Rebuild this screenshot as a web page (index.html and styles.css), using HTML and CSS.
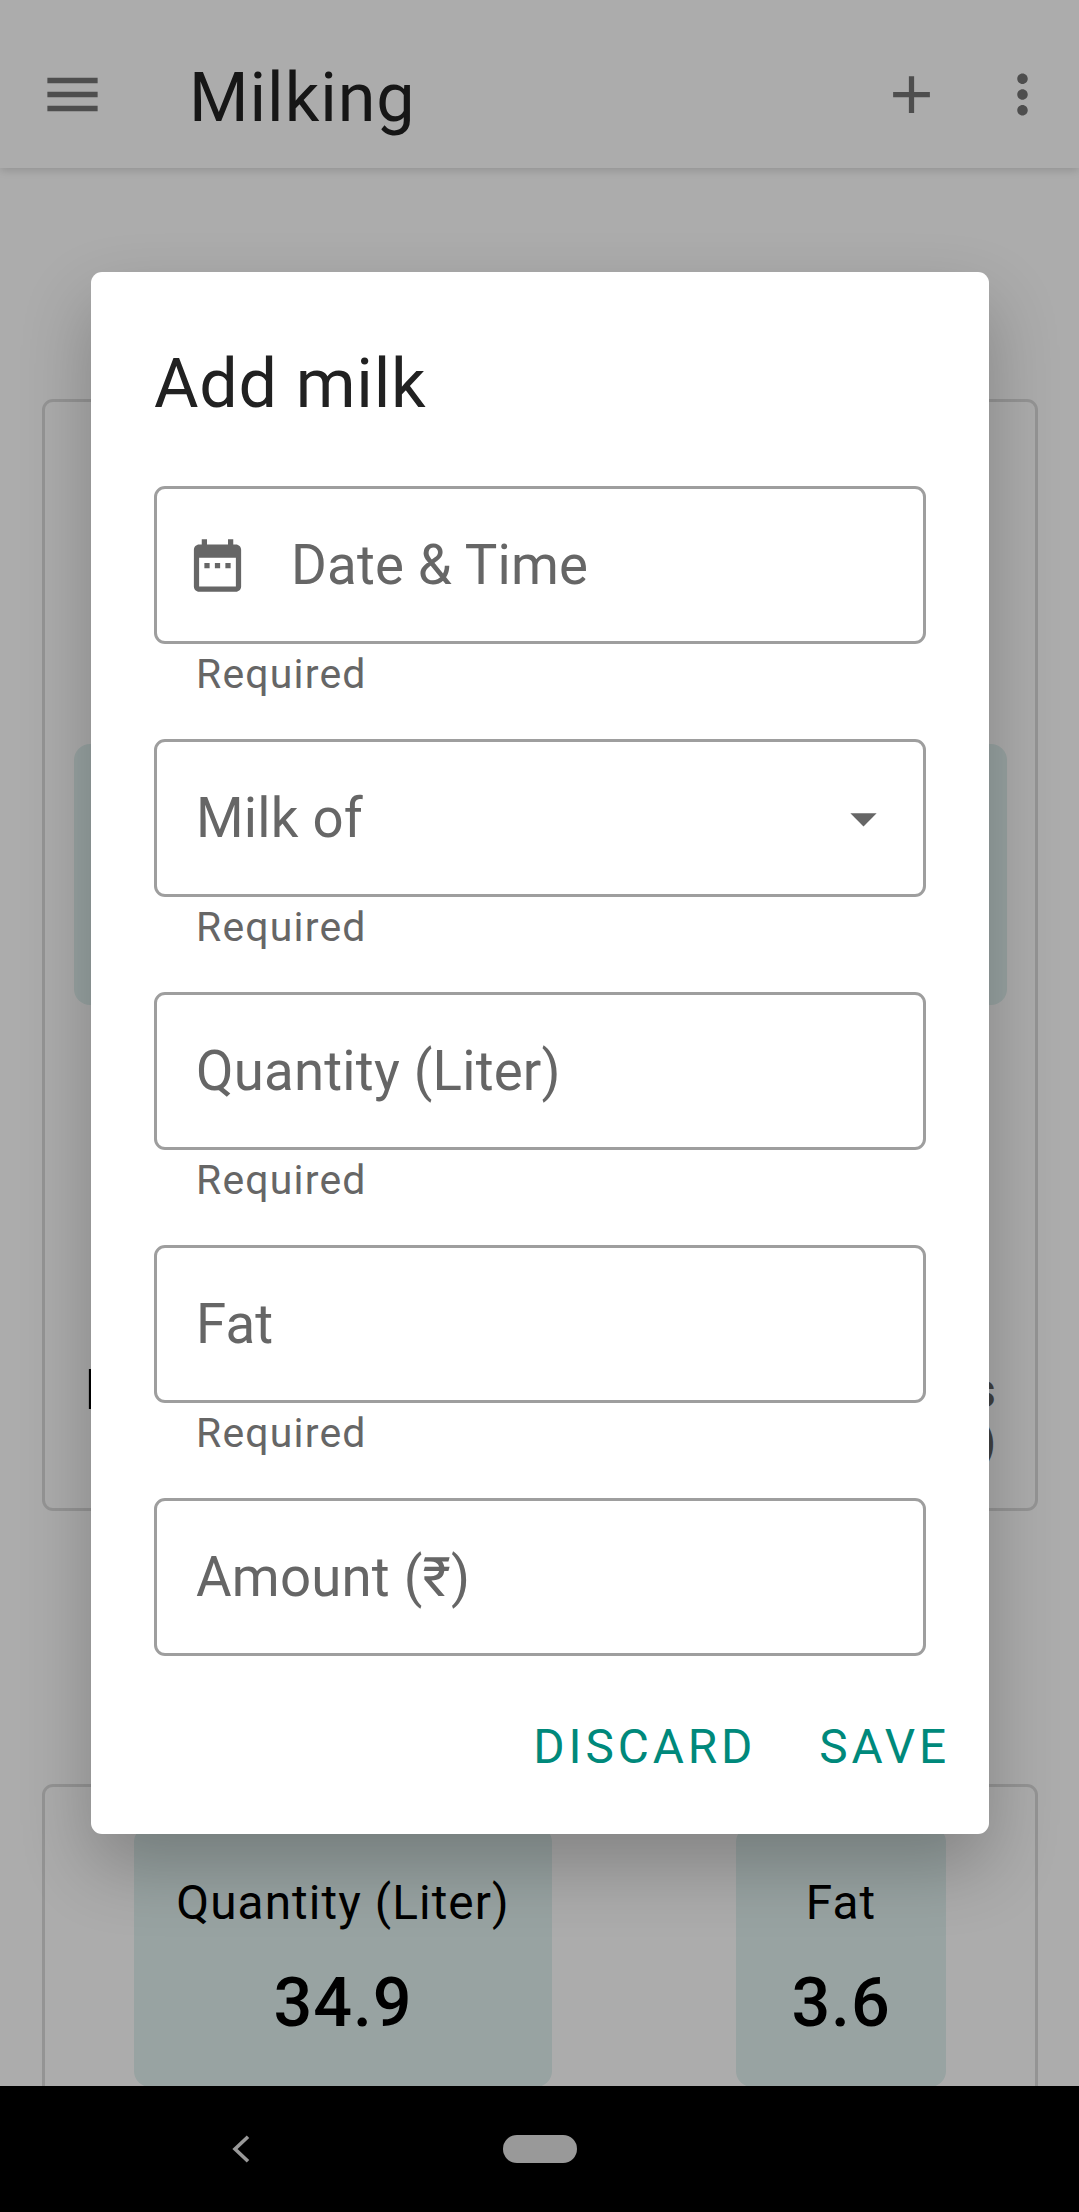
FILE: index.html
```html
<!DOCTYPE html>
<html lang="en">
<head>
<meta charset="utf-8">
<title>Milking</title>
<link rel="stylesheet" href="styles.css">
</head>
<body>
<div class="app">
  <div class="screen">
    <header class="appbar">
      <svg class="icon-menu" viewBox="0 0 24 24"><path d="M3 18h18v-2H3v2zm0-5h18v-2H3v2zm0-7v2h18V6H3z"/></svg>
      <h1 class="appbar-title">Milking</h1>
      <svg class="icon icon-add" viewBox="0 0 24 24"><path d="M19 13h-6v6h-2v-6H5v-2h6V5h2v6h6v2z"/></svg>
      <svg class="icon icon-more" viewBox="0 0 24 24"><path d="M12 8c1.1 0 2-.9 2-2s-.9-2-2-2-2 .9-2 2 .9 2 2 2zm0 2c-1.1 0-2 .9-2 2s.9 2 2 2 2-.9 2-2-.9-2-2-2zm0 6c-1.1 0-2 .9-2 2s.9 2 2 2 2-.9 2-2-.9-2-2-2z"/></svg>
    </header>

    <main class="content">
      <section class="card card-summary">
        <div class="tile-wide"></div>
        <div class="summary-row">
          <span class="summary-name">I</span>
          <span class="summary-unit">s<br>)</span>
        </div>
      </section>
      <section class="card card-totals">
        <div class="tile tile-quantity">
          <span class="tile-label">Quantity (Liter)</span>
          <span class="tile-value">34.9</span>
        </div>
        <div class="tile tile-fat">
          <span class="tile-label">Fat</span>
          <span class="tile-value">3.6</span>
        </div>
      </section>
    </main>

    <div class="scrim">
      <div class="dialog" role="dialog">
        <h2 class="dialog-title">Add milk</h2>
        <div class="field">
          <div class="field-box">
            <svg class="icon field-lead" viewBox="0 0 24 24"><path d="M9 11H7v2h2v-2zm4 0h-2v2h2v-2zm4 0h-2v2h2v-2zm2-7h-1V2h-2v2H8V2H6v2H5c-1.11 0-1.99.9-1.99 2L3 20c0 1.1.89 2 2 2h14c1.1 0 2-.9 2-2V6c0-1.1-.9-2-2-2zm0 16H5V9h14v11z"/></svg>
            <span class="field-label">Date &amp; Time</span>
          </div>
          <p class="field-help">Required</p>
        </div>
        <div class="field">
          <div class="field-box">
            <span class="field-label">Milk of</span>
            <svg class="icon field-trail" viewBox="0 0 24 24"><path d="M7 10l5 5 5-5z"/></svg>
          </div>
          <p class="field-help">Required</p>
        </div>
        <div class="field">
          <div class="field-box"><span class="field-label">Quantity (Liter)</span></div>
          <p class="field-help">Required</p>
        </div>
        <div class="field">
          <div class="field-box"><span class="field-label">Fat</span></div>
          <p class="field-help">Required</p>
        </div>
        <div class="field">
          <div class="field-box"><span class="field-label">Amount (₹)</span></div>
        </div>
        <div class="actions">
          <button class="action">DISCARD</button>
          <button class="action">SAVE</button>
        </div>
      </div>
    </div>
  </div>

  <nav class="navbar">
    <svg class="nav-back" viewBox="0 0 18 28"><path d="M16 1.7L3 14l13 12.3"/></svg>
    <span class="nav-home"></span>
  </nav>
</div>
</body>
</html>
```
FILE: styles.css
```css
* { box-sizing: border-box; }

body {
  margin: 0;
  font-family: Roboto, "Noto Sans", sans-serif;
  color: #000;
}

h1, h2, p { margin: 0; font-weight: 400; }

svg { display: block; flex: none; }

.app {
  display: flex;
  flex-direction: column;
  height: 2212px;
  background: #000;
}

.screen {
  position: relative;
  height: 2086px;
  overflow: hidden;
  background: #fefefe;
}

.icon { width: 63px; height: 63px; fill: #666; }

/* App bar */
.appbar {
  position: relative;
  display: flex;
  align-items: center;
  height: 168px;
  padding: 20px 25px 0 39px;
  background: #fefefe;
  box-shadow: 0 3px 8px rgba(0, 0, 0, .14);
}

.appbar svg { fill: #747474; }
.icon-menu { width: 67px; height: 67px; }
.icon-add { margin-left: auto; }
.icon-more { margin-left: 48px; }

.appbar-title {
  margin-left: 83px;
  padding-top: 7px;
  font-size: 68.25px;
  line-height: 80px;
  letter-spacing: .95px;
  color: #212121;
}

/* Content behind the dialog */
.content { padding: 231px 41px 0 42px; }

.card {
  border: 3px solid #dbdbdb;
  border-radius: 11px;
}

.card-summary { height: 1112px; padding: 342px 28px 0 29px; }

.tile-wide {
  height: 261px;
  border-radius: 16px;
  background: #e0f1ef;
}

.summary-row {
  display: flex;
  justify-content: space-between;
  margin-top: 360px;
  padding: 0 10px;
  line-height: 51px;
}

.summary-name { font-size: 54.6px; }

.summary-unit {
  padding-top: 1px;
  font-size: 47.775px;
  font-weight: 500;
  letter-spacing: 1.07px;
  text-align: right;
  color: #606060;
}

.card-totals {
  display: flex;
  justify-content: space-between;
  height: 420px;
  margin-top: 273px;
  padding: 39px 89px 0;
}

.tile {
  display: flex;
  flex-direction: column;
  align-items: center;
  height: 261px;
  padding-top: 47px;
  border-radius: 16px;
  background: #e0f1ef;
}

.tile-quantity { width: 418px; }
.tile-fat { width: 210px; }

.tile-label {
  font-size: 47.775px;
  line-height: 60px;
  letter-spacing: 1.07px;
}

.tile-value {
  margin-top: 30px;
  font-size: 68.25px;
  font-weight: 500;
  line-height: 80px;
  letter-spacing: .9px;
}

/* Dialog */
.scrim {
  position: absolute;
  inset: 0;
  padding: 272px 90px 0 91px;
  background: rgba(0, 0, 0, .32);
}

.dialog {
  display: flex;
  flex-direction: column;
  height: 1562px;
  padding: 72px 63px 0;
  border-radius: 11px;
  background: #fff;
  box-shadow: 0 32px 70px rgba(0, 0, 0, .24);
}

.dialog-title {
  margin-bottom: 62px;
  font-size: 68.25px;
  line-height: 80px;
  letter-spacing: .8px;
  color: #212121;
}

.field + .field { margin-top: 41px; }

.field-box {
  display: flex;
  align-items: center;
  height: 158px;
  padding: 0 28px 0 39px;
  border: 3px solid #9e9e9e;
  border-radius: 11px;
}

.field-lead { margin: 0 42px 0 -10px; }
.field-trail { margin-left: auto; }

.field-label {
  font-size: 54.6px;
  line-height: 64px;
  letter-spacing: .2px;
  color: #666;
}

.field-help {
  height: 54px;
  padding: 6px 42px 0;
  font-size: 40.95px;
  line-height: 48px;
  letter-spacing: 1.2px;
  color: #666;
}

.actions {
  display: flex;
  flex: 1;
  align-items: center;
  justify-content: flex-end;
  gap: 63px;
  margin-right: -24px;
  padding-top: 3px;
}

.action {
  padding: 0;
  border: 0;
  background: none;
  font: 400 47.775px/56px Roboto, "Noto Sans", sans-serif;
  letter-spacing: 3.9px;
  color: #00897b;
}

/* System navigation */
.navbar {
  display: flex;
  align-items: center;
  height: 126px;
  padding-left: 232px;
}

.nav-back {
  width: 18px;
  height: 28px;
  fill: none;
  stroke: #999;
  stroke-width: 3.6;
}

.nav-home {
  width: 74px;
  height: 28px;
  margin-left: 253px;
  border-radius: 14px;
  background: #999;
}
```
